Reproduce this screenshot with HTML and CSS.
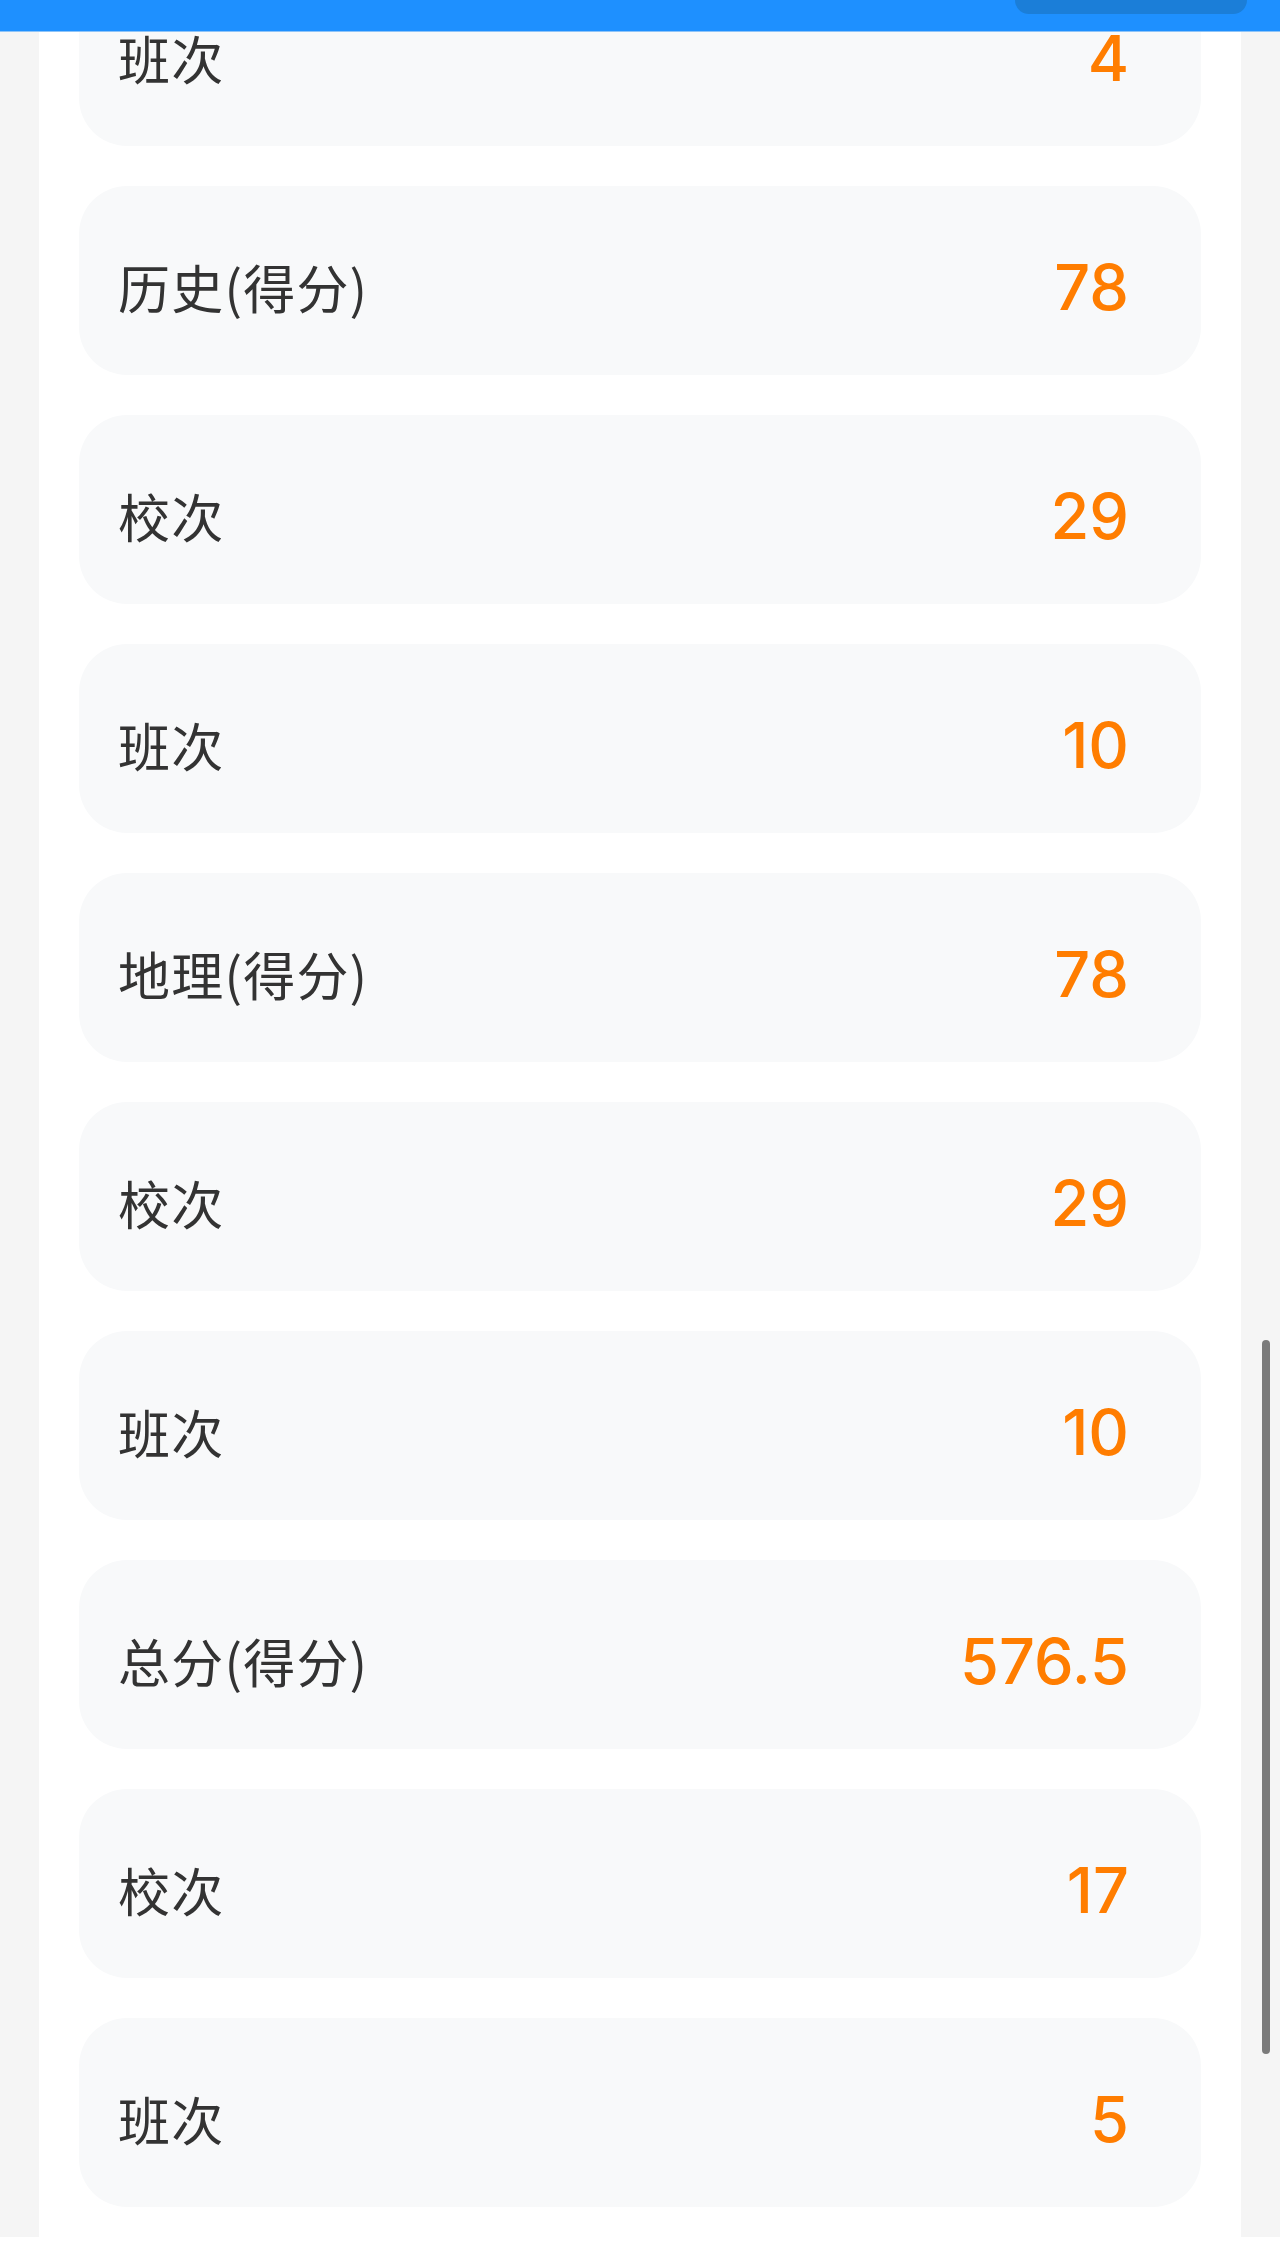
FILE: index.html
```html
<!DOCTYPE html>
<html lang="zh-CN">
<head>
<meta charset="utf-8">
<title>成绩详情</title>
<link rel="stylesheet" href="styles.css">
</head>
<body>
<header class="topbar"><div class="topbar-pill"></div></header>
<div class="page">
  <main class="panel">
    <div class="row first"><span class="label">班次</span><span class="value">4</span></div>
    <div class="row"><span class="label">历史(得分)</span><span class="value">78</span></div>
    <div class="row"><span class="label">校次</span><span class="value">29</span></div>
    <div class="row"><span class="label">班次</span><span class="value">10</span></div>
    <div class="row"><span class="label">地理(得分)</span><span class="value">78</span></div>
    <div class="row"><span class="label">校次</span><span class="value">29</span></div>
    <div class="row"><span class="label">班次</span><span class="value">10</span></div>
    <div class="row"><span class="label">总分(得分)</span><span class="value">576.5</span></div>
    <div class="row"><span class="label">校次</span><span class="value">17</span></div>
    <div class="row"><span class="label">班次</span><span class="value">5</span></div>
  </main>
</div>
<div class="scrollbar"></div>
</body>
</html>
```
FILE: styles.css
```css
html, body {
  margin: 0;
  padding: 0;
  background: #ffffff;
}
body {
  font-family: "Noto Sans CJK SC", "Noto Sans", sans-serif;
  color: #333333;
  overflow: hidden;
}
.topbar {
  position: fixed;
  top: 0;
  left: 0;
  right: 0;
  height: 31px;
  background: #1e90ff;
  border-bottom: 1px solid #8ec4f8;
  z-index: 10;
}
.topbar-pill {
  position: absolute;
  top: 0;
  left: 1015px;
  width: 232px;
  height: 14px;
  background: #1b7ed8;
  border-radius: 0 0 16px 16px;
}
.page {
  background: #f5f5f5;
  padding: 0 39px;
}
.panel {
  background: #ffffff;
  display: flex;
  flex-direction: column;
  gap: 40px;
  padding: 0 40px 30px;
}
.row {
  height: 189px;
  box-sizing: border-box;
  background: #f8f9fa;
  border-radius: 48px;
  display: flex;
  align-items: center;
  justify-content: space-between;
  padding: 12px 72px 0 39px;
}
.row.first {
  margin-top: -43px;
}
.label {
  font-size: 52px;
  letter-spacing: 1.2px;
  color: #333333;
}
.value {
  font-family: Inter, "Noto Sans", sans-serif;
  font-size: 63px;
  font-weight: 500;
  color: #ff7d00;
}
.scrollbar {
  position: fixed;
  left: 1262px;
  top: 1340px;
  width: 8px;
  height: 714px;
  border-radius: 4px;
  background: #7b7b7b;
}
```
